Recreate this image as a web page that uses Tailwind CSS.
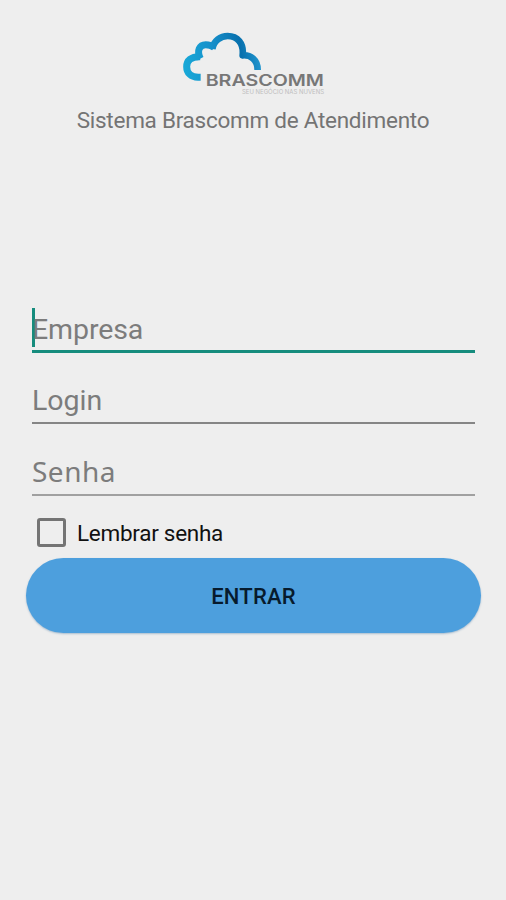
<!DOCTYPE html>
<html lang="pt-BR">
<head>
<meta charset="utf-8">
<title>Brascomm</title>
<script src="https://cdn.jsdelivr.net/npm/@tailwindcss/browser@4"></script>
</head>
<body class="bg-[#eeeeee]">
<main class="flex h-[900px] w-[506px] flex-col overflow-hidden bg-[#eeeeee] pt-[25px] font-[Roboto,sans-serif]">
  <header class="flex flex-col items-center">
    <svg class="h-20 w-40" viewBox="0 0 480 240" role="img" aria-label="Brascomm">
      <defs>
        <linearGradient id="cloud" gradientUnits="userSpaceOnUse" x1="30" y1="120" x2="265" y2="90">
          <stop offset="0" stop-color="#18a9d8"/>
          <stop offset="0.4" stop-color="#168fca"/>
          <stop offset="0.75" stop-color="#0870ad"/>
          <stop offset="1" stop-color="#2299d2"/>
        </linearGradient>
      </defs>
      <g fill="none" stroke="url(#cloud)">
        <path stroke-width="21" d="M83 157H75C54 156 41 144 41 125C41 107 54 94 82 95"/>
        <path stroke-width="21" d="M82 101C70 77 80 59 98 59C108 59 117 62 124 68"/>
        <path stroke-width="20" stroke-linejoin="round" d="M118 72C122 47 143 33 164 33C193 33 213 54 209 91C232 89 254 104 254 135"/>
      </g>
      <g font-family="Inter, sans-serif">
        <text x="98" y="182" font-size="47" font-weight="600" fill="#777777" textLength="355" lengthAdjust="spacingAndGlyphs">BRASCOMM</text>
        <text x="207" y="207" font-size="18" fill="#bdbdbd" textLength="246" lengthAdjust="spacingAndGlyphs">SEU NEGÓCIO NAS NUVENS</text>
      </g>
    </svg>
    <h1 class="h-[31px] whitespace-nowrap text-[22.5px] leading-[31px] tracking-[-0.26px] text-[#747474]">Sistema Brascomm de Atendimento</h1>
  </header>
  <form class="mt-[172px] flex flex-col">
    <div class="mr-[31px] ml-8 flex h-[45px] flex-col border-b-[3px] border-[#168c7d]">
      <div class="flex h-[39px] items-center border-l-[3px] border-[#168c7d]"><span class="-ml-[3px] pt-1 text-[28.5px] leading-10 tracking-[-0.1px] text-[#7c7c7c]">Empresa</span></div>
    </div>
    <div class="mr-[31px] ml-8 flex h-[71px] flex-col justify-end border-b-2 border-[#858585] pb-px">
      <span class="text-[28.5px] leading-10 text-[#7c7c7c]">Login</span>
    </div>
    <div class="mr-[31px] ml-8 flex h-[72px] flex-col justify-end border-b-2 border-[#a0a0a0] pb-[3px]">
      <span class="font-['Noto_Sans',sans-serif] text-[28px] leading-10 tracking-[0.5px] text-[#7c7c7c]">Senha</span>
    </div>
    <div class="mt-[22px] ml-[37px] flex h-[29px] items-center gap-[11px]">
      <span class="size-[29px] rounded-[3px] border-3 border-[#747474]"></span>
      <span class="pt-[2px] text-[22.5px] leading-[29px] tracking-[-0.28px] text-[#111111]">Lembrar senha</span>
    </div>
    <button type="button" class="mt-[11px] mr-[25px] ml-[26px] h-[75px] rounded-full bg-[#4d9fdd] pt-[2px] text-[22px] font-medium tracking-[0.2px] text-[#071b2d] shadow-[0_1px_2px_#a8bdcf]">ENTRAR</button>
  </form>
</main>
</body>
</html>
